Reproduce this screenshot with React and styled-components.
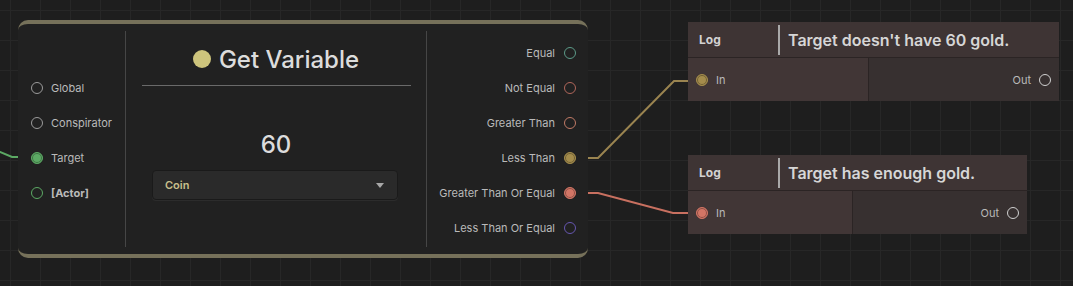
import styled, {createGlobalStyle} from 'styled-components';

const GlobalStyle = createGlobalStyle`
  html, body {
    margin: 0;
    padding: 0;
    background: #1e1e1e;
  }
  * {
    box-sizing: border-box;
  }
`

const Canvas = styled.div`
  position: relative;
  width: 1073px;
  height: 286px;
  overflow: hidden;
  font-family: Inter, "Noto Sans", sans-serif;
  background-color: #1e1e1e;
  background-image:
    linear-gradient(to right, #272727 1px, transparent 1px),
    linear-gradient(to bottom, #272727 1px, transparent 1px);
  background-size: 30px 30px;
  background-position: 10px 10px;
`

const Wires = styled.svg`
  position: absolute;
  left: 0;
  top: 0;
  width: 1073px;
  height: 286px;
  pointer-events: none;

  & path {
    fill: none;
    stroke-width: 2;
  }
`

const Node = styled.div`
  position: absolute;
  left: 18px;
  top: 20px;
  width: 570px;
  height: 238px;
  background: #212121;
  border-top: 4px solid #76715a;
  border-bottom: 4px solid #76715a;
  border-radius: 10px;
  display: grid;
  grid-template-columns: 107px 301px 1fr;
  padding: 7px 0;
`

const PortColumn = styled.div`
  display: flex;
  flex-direction: column;
  justify-content: center;
  align-items: ${p => p.$right ? 'flex-end' : 'flex-start'};
  padding: ${p => p.$right ? '2px 12px 0 0' : '2px 0 0 13px'};
  ${p => p.$right && 'border-left: 1px solid #464646;'}
`

const PortRow = styled.div`
  height: 35px;
  display: flex;
  align-items: center;
  gap: ${p => p.$right ? '9px' : '8px'};
  font-size: 11px;
  color: #bababa;
  font-weight: ${p => p.$bold ? 700 : 400};
`

const Dot = styled.span`
  flex: none;
  width: 12px;
  height: 12px;
  border-radius: 50%;
  border: 1.5px solid ${p => p.$color};
  background: ${p => p.$filled ? p.$color : 'transparent'};
  box-shadow: ${p => p.$filled ? 'inset 0 0 0 1px rgba(0,0,0,0.35)' : 'none'};
`

const Center = styled.div`
  border-left: 1px solid #464646;
  display: flex;
  flex-direction: column;
  padding-top: 14px;
`

const Title = styled.div`
  display: flex;
  align-items: center;
  justify-content: center;
  gap: 8px;
  height: 28px;
  font-size: 24px;
  font-weight: 500;
  color: #dcdcdc;

  &::before {
    content: '';
    width: 18px;
    height: 18px;
    border-radius: 50%;
    background: #cdc47c;
  }
`

const Rule = styled.div`
  height: 1px;
  background: #6a6a6a;
  margin: 12px 15px 0 16px;
`

const Value = styled.div`
  margin-top: 45px;
  height: 28px;
  line-height: 28px;
  text-align: center;
  font-size: 24px;
  font-weight: 500;
  color: #dcdcdc;
`

const Select = styled.div`
  margin: 11px 28px 0 26px;
  height: 30px;
  border-radius: 4px;
  background: #2a2a2a;
  border: 1px solid #1a1a1a;
  box-shadow: 0 1px 0 #2c2c2c;
  display: flex;
  align-items: center;
  justify-content: space-between;
  padding: 0 13px 0 12px;
  font-size: 11px;
  font-weight: 600;
  color: #c9c08c;

  &::after {
    content: '';
    border-left: 4px solid transparent;
    border-right: 4px solid transparent;
    border-top: 5px solid #a8a8a8;
  }
`

const LogNode = styled.div`
  position: absolute;
  left: ${p => p.$x}px;
  top: ${p => p.$y}px;
  width: ${p => p.$w}px;
  display: flex;
  flex-direction: column;
`

const LogHeader = styled.div`
  height: 36px;
  background: #3e3434;
  border-bottom: 1px solid #2b2424;
  display: flex;
  align-items: center;
`

const LogLabel = styled.div`
  width: 90px;
  padding-left: 11px;
  font-size: 12px;
  font-weight: 700;
  color: #d2d2d2;
`

const LogText = styled.div`
  height: 30px;
  display: flex;
  align-items: center;
  border-left: 2px solid #a9a9a9;
  padding-left: 8px;
  font-size: 16px;
  font-weight: 600;
  color: #d6d6d6;
`

const LogBody = styled.div`
  height: 43px;
  display: flex;
`

const LogPort = styled.div`
  display: flex;
  align-items: center;
  gap: 8px;
  font-size: 11px;
  color: #b9b9b9;
  padding: 0 8px;
  ${p => p.$out ? `
    flex: 1;
    justify-content: flex-end;
    background: #373030;
  ` : `
    width: 48.8%;
    background: #413636;
    border-right: 1px solid #2b2424;
  `}
`

const leftPorts = [
  {label: 'Global', color: '#9b9b9b'},
  {label: 'Conspirator', color: '#9b9b9b'},
  {label: 'Target', color: '#5ca964', filled: true},
  {label: '[Actor]', color: '#5ca964', bold: true},
]

const rightPorts = [
  {label: 'Equal', color: '#5c9a88'},
  {label: 'Not Equal', color: '#b0665a'},
  {label: 'Greater Than', color: '#c07a66'},
  {label: 'Less Than', color: '#a48c4c', filled: true},
  {label: 'Greater Than Or Equal', color: '#d27565', filled: true},
  {label: 'Less Than Or Equal', color: '#6656b0'},
]

function Log({x, y, w, text, color}) {
  return (
    <LogNode $x={x} $y={y} $w={w}>
      <LogHeader>
        <LogLabel>Log</LogLabel>
        <LogText>{text}</LogText>
      </LogHeader>
      <LogBody>
        <LogPort><Dot $color={color} $filled />In</LogPort>
        <LogPort $out>Out<Dot $color="#d0d0d0" /></LogPort>
      </LogBody>
    </LogNode>
  )
}

export default function App() {
  return (
    <Canvas>
      <GlobalStyle />
      <Wires>
        <path d="M -10 150 L 0 152 L 12 157 L 20 157" stroke="#5ca964" />
        <path d="M 576 158 L 598 158 L 674 81 L 696 81" stroke="#9a8450" />
        <path d="M 576 193 L 598 193 L 673 213 L 696 213" stroke="#c87060" />
      </Wires>

      <Node>
        <PortColumn>
          {leftPorts.map(p => (
            <PortRow key={p.label} $bold={p.bold}>
              <Dot $color={p.color} $filled={p.filled} />
              {p.label}
            </PortRow>
          ))}
        </PortColumn>
        <Center>
          <Title>Get Variable</Title>
          <Rule />
          <Value>60</Value>
          <Select>Coin</Select>
        </Center>
        <PortColumn $right>
          {rightPorts.map(p => (
            <PortRow key={p.label} $right>
              {p.label}
              <Dot $color={p.color} $filled={p.filled} />
            </PortRow>
          ))}
        </PortColumn>
      </Node>

      <Log x={688} y={22} w={371} text="Target doesn't have 60 gold." color="#a48c4c" />
      <Log x={688} y={155} w={339} text="Target has enough gold." color="#d27565" />
    </Canvas>
  )
}
